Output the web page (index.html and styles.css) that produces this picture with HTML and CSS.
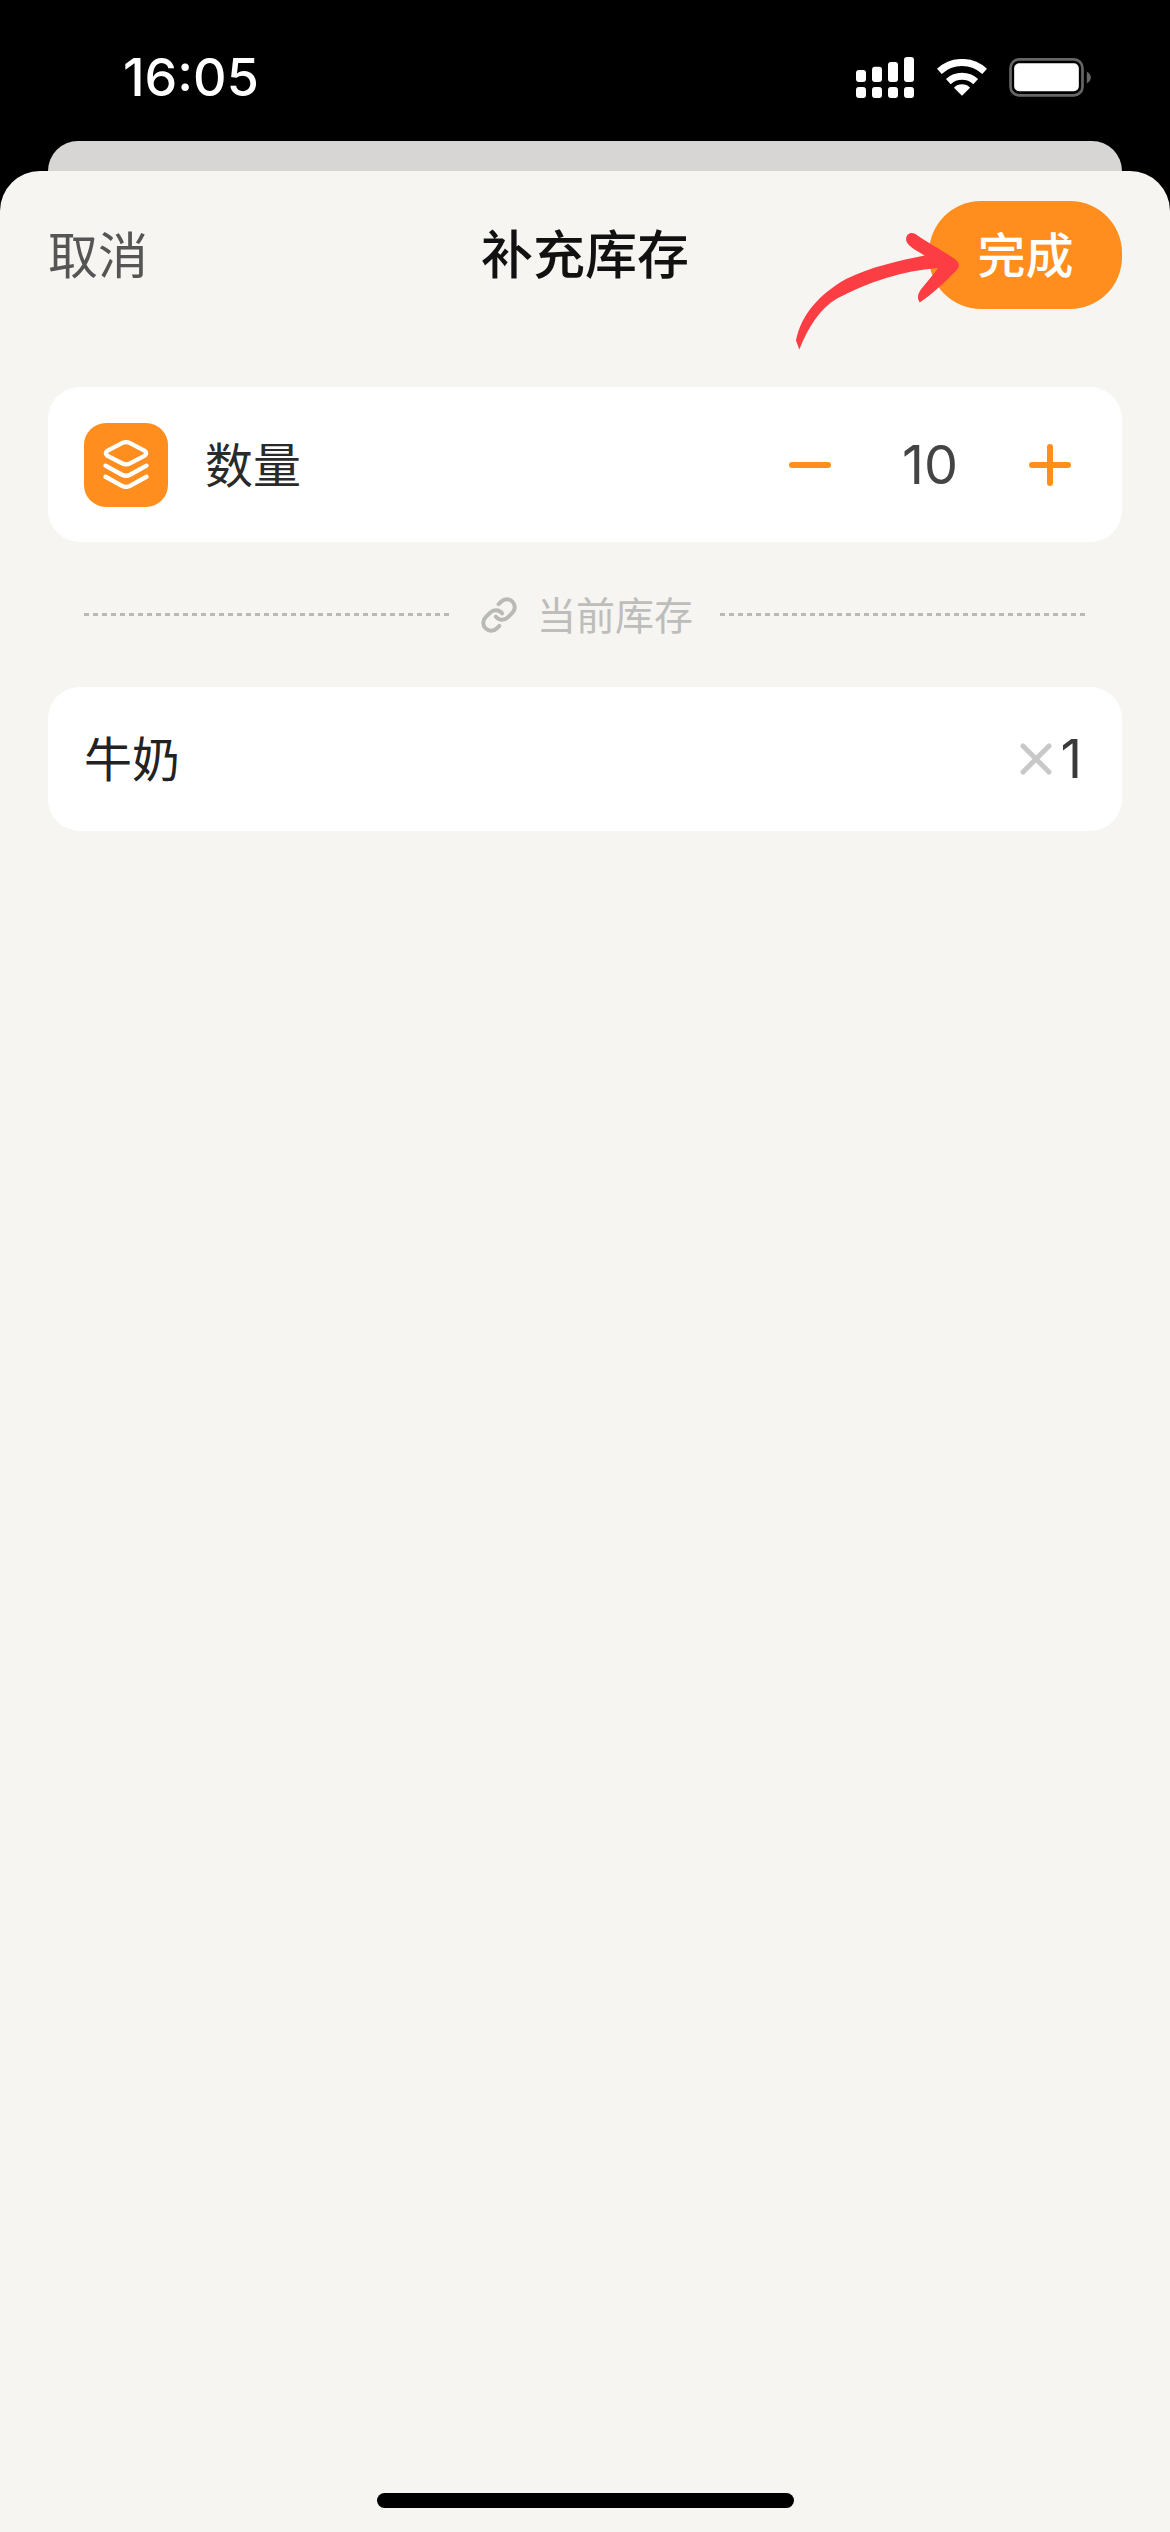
FILE: index.html
```html
<!DOCTYPE html>
<html lang="zh-CN">
<head>
    <meta charset="UTF-8">
    <meta name="viewport" content="width=device-width, initial-scale=1.0">
    <title>补充库存</title>
    <link rel="stylesheet" href="styles.css">
</head>
<body>
<div class="status-bar">
    <span class="time">16:05</span>
    <div class="status-icons">
        <svg class="icon-signal" viewBox="258 81 174 123" fill="#fff">
            <rect x="258" y="120" width="30" height="36" rx="9"/>
            <rect x="306" y="110" width="30" height="46" rx="9"/>
            <rect x="354" y="96" width="30" height="60" rx="9"/>
            <rect x="402" y="81" width="30" height="75" rx="9"/>
            <rect x="258" y="171" width="30" height="33" rx="9"/>
            <rect x="306" y="171" width="30" height="33" rx="9"/>
            <rect x="354" y="171" width="30" height="33" rx="9"/>
            <rect x="402" y="171" width="30" height="33" rx="9"/>
        </svg>
        <svg class="icon-wifi" viewBox="500 88 150 111">
            <path d="M507 125A100 100 0 0 1 643 125" fill="none" stroke="#fff" stroke-width="21"/>
            <path d="M534 156A60 60 0 0 1 616 156" fill="none" stroke="#fff" stroke-width="21"/>
            <path d="M575 198L551 174A34 34 0 0 1 599 174Z" fill="#fff"/>
        </svg>
        <svg class="icon-battery" viewBox="718 84 245 117">
            <rect x="722" y="88" width="216" height="108" rx="26" fill="none" stroke="#666" stroke-width="8"/>
            <rect x="733" y="100" width="194" height="84" rx="15" fill="#fff"/>
            <path d="M951 125C958 128 963 135 963 142C963 150 958 157 951 160Z" fill="#666"/>
        </svg>
    </div>
</div>
<div class="back-card"></div>
<div class="sheet">
    <div class="header">
        <span class="cancel">取消</span>
        <span class="title">补充库存</span>
        <button class="done">完成</button>
    </div>

    <div class="card qty-card">
        <div class="qty-icon">
            <svg viewBox="253 160 250 250" width="84" height="84" fill="none" stroke="#fff" stroke-width="13" stroke-linecap="round" stroke-linejoin="round">
                <path d="M322 243L366 220Q378 214 390 220L434 243Q442 250 434 257L390 280Q378 286 366 280L322 257Q314 250 322 243Z"/>
                <path d="M317 287L366 314Q378 320 390 314L439 287"/>
                <path d="M317 320L366 347Q378 353 390 347L439 320"/>
            </svg>
        </div>
        <span class="qty-label">数量</span>
        <div class="stepper">
            <svg viewBox="0 0 42 42" width="42" height="42" stroke="#ff8e1f" stroke-width="6" stroke-linecap="round">
                <path d="M3 21H39"/>
            </svg>
            <span class="qty-value">10</span>
            <svg viewBox="0 0 42 42" width="42" height="42" stroke="#ff8e1f" stroke-width="6" stroke-linecap="round">
                <path d="M3 21H39M21 3V39"/>
            </svg>
        </div>
    </div>

    <div class="divider">
        <div class="dash"></div>
        <svg class="icon-link" viewBox="0 0 24 24" fill="none" stroke="#b9b9b7" stroke-width="2.5" stroke-linecap="round" stroke-linejoin="round">
            <path d="M10 13a5 5 0 0 0 7.54.54l3-3a5 5 0 0 0-7.07-7.07l-1.72 1.71"/>
            <path d="M14 11a5 5 0 0 0-7.54-.54l-3 3a5 5 0 0 0 7.07 7.07l1.71-1.71"/>
        </svg>
        <span class="divider-text">当前库存</span>
        <div class="dash"></div>
    </div>

    <div class="card stock-card">
        <span class="stock-name">牛奶</span>
        <div class="stock-count">
            <svg viewBox="0 0 32 32" width="32" height="32" stroke="#c8c8c8" stroke-width="5" stroke-linecap="round">
                <path d="M3 3L29 29M29 3L3 29"/>
            </svg>
            <span class="stock-num">1</span>
        </div>
    </div>

    <div class="home-bar"></div>

    <!-- annotation drawn over the done button -->
    <svg class="arrow" viewBox="60 590 520 380" fill="#fc3d44">
        <path d="M78 930C95 850 150 790 230 745C300 710 390 690 465 675C440 660 420 650 411 635C403 615 420 600 437 610C480 640 520 660 555 685C570 695 572 707 560 720C525 755 490 790 450 816C440 800 445 790 455 775C470 755 490 735 505 712C400 720 290 755 200 805C150 835 115 890 88 957Z"/>
    </svg>
</div>
</body>
</html>
```

FILE: styles.css
```css
html, body {
    height: 100%;
}
body {
    margin: 0;
    background-color: #000;
    font-family: "Noto Sans CJK SC", "Noto Sans", sans-serif;
    display: flex;
    flex-direction: column;
}
.status-bar {
    height: 141px;
    box-sizing: border-box;
    padding: 48px 79px 0 123px;
    display: flex;
    justify-content: space-between;
    align-items: flex-start;
}
.time {
    font-family: Inter, sans-serif;
    font-size: 52px;
    font-weight: 500;
    line-height: 60px;
    color: #fff;
}
.status-icons {
    display: flex;
    align-items: flex-start;
    margin-top: 9px;
}
.icon-signal {
    width: 58px;
    height: 41px;
    margin-right: 23px;
}
.icon-wifi {
    width: 50px;
    height: 37px;
    margin-top: 2px;
    margin-right: 22px;
}
.icon-battery {
    width: 82px;
    height: 39px;
    margin-top: 1px;
}
.back-card {
    height: 30px;
    margin: 0 48px;
    background-color: #d7d6d4;
    border-radius: 32px 32px 0 0;
}
.sheet {
    position: relative;
    flex: 1;
    display: flex;
    flex-direction: column;
    padding: 30px 48px 0;
    background-color: #f6f5f1;
    border-radius: 40px 40px 0 0;
}
.header {
    display: grid;
    grid-template-columns: 1fr auto 1fr;
    align-items: center;
    height: 108px;
    margin-bottom: 78px;
}
.cancel {
    padding-bottom: 7px;
    font-size: 50px;
    color: #555;
}
.title {
    padding-bottom: 7px;
    font-size: 52px;
    font-weight: 500;
    color: #111;
}
.done {
    justify-self: end;
    width: 193px;
    height: 108px;
    padding: 0 0 6px;
    border: none;
    border-radius: 52px;
    background-color: #ff8e1f;
    color: #fff;
    font-family: inherit;
    font-size: 48px;
    font-weight: 500;
}
.card {
    display: flex;
    align-items: center;
    background-color: #fff;
    border-radius: 32px;
}
.qty-card {
    height: 155px;
    padding: 0 51px 0 36px;
}
.qty-icon {
    width: 84px;
    height: 84px;
    margin-right: 37px;
    border-radius: 22px;
    background-color: #ff8e1f;
}
.qty-label {
    padding-bottom: 6px;
    font-size: 48px;
    color: #2a2a2a;
}
.stepper {
    display: flex;
    align-items: center;
    margin-left: auto;
}
.qty-value {
    width: 198px;
    text-align: center;
    font-family: Inter, sans-serif;
    font-size: 54px;
    color: #444;
}
.divider {
    display: flex;
    align-items: center;
    height: 145px;
    padding: 0 36px;
}
.dash {
    flex: 1;
    height: 3px;
    background: repeating-linear-gradient(to right, #b9b9b7 0, #b9b9b7 5px, transparent 5px, transparent 9px);
}
.icon-link {
    width: 38px;
    height: 38px;
    margin-left: 30px;
    margin-right: 19px;
}
.divider-text {
    margin-right: 27px;
    padding-bottom: 3px;
    font-size: 39px;
    color: #bdbdbb;
}
.stock-card {
    height: 144px;
    padding: 0 40px 0 36px;
    justify-content: space-between;
}
.stock-name {
    padding-bottom: 6px;
    font-size: 48px;
    color: #222;
}
.stock-count {
    display: flex;
    align-items: center;
    gap: 8px;
}
.stock-num {
    font-family: Inter, sans-serif;
    font-size: 53px;
    color: #3a3a3a;
}
.home-bar {
    align-self: center;
    width: 417px;
    height: 15px;
    margin-top: auto;
    margin-bottom: 24px;
    border-radius: 8px;
    background-color: #000;
}
.arrow {
    position: absolute;
    left: 790px;
    top: 56px;
    width: 173px;
    height: 127px;
}
```
